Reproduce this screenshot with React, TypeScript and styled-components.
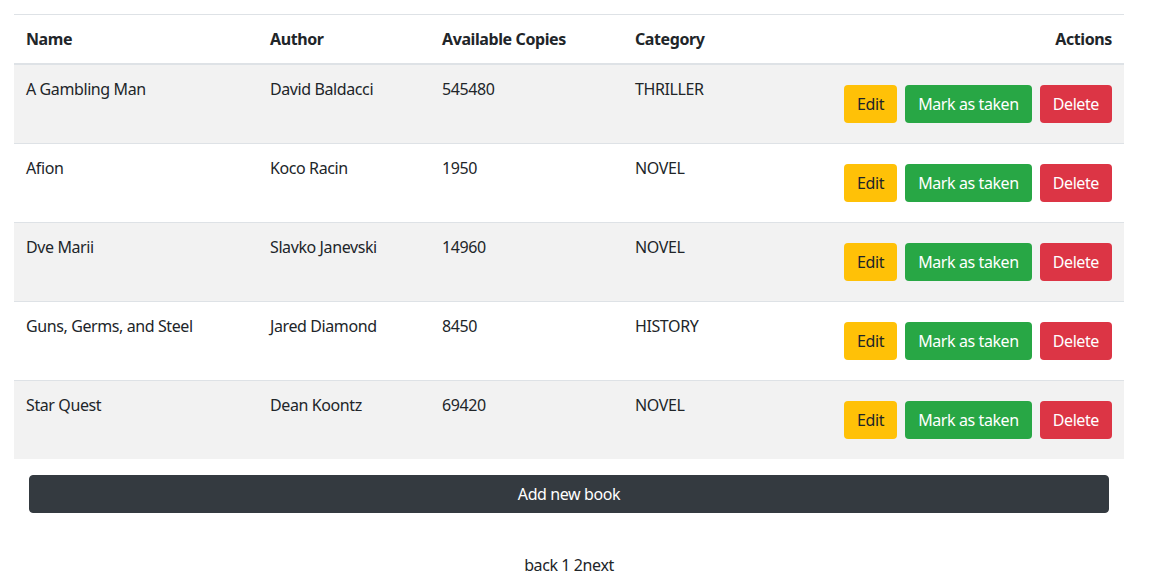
import styled, { createGlobalStyle } from "styled-components";

const GlobalStyle = createGlobalStyle`
  body {
    margin: 0;
    background: #fff;
    color: #212529;
    font-family: "Segoe UI", "Noto Sans", "Open Sans", sans-serif;
    font-size: 16px;
    line-height: 1.5;
    letter-spacing: -0.4px;
  }
`;

const Page = styled.div`
  width: 1110px;
  padding: 14px;
`;

const Table = styled.table`
  width: 100%;
  border-collapse: collapse;
  color: #212529;
`;

const HeadCell = styled.th<{ $right?: boolean; $width?: number }>`
  padding: 12px;
  border-top: 1px solid #dee2e6;
  border-bottom: 2px solid #dee2e6;
  font-weight: 700;
  text-align: ${(p) => (p.$right ? "right" : "left")};
  vertical-align: bottom;
  width: ${(p) => (p.$width ? `${p.$width}px` : "auto")};
  box-sizing: border-box;
`;

const Row = styled.tr<{ $striped: boolean }>`
  background: ${(p) => (p.$striped ? "#f2f2f2" : "transparent")};
`;

const Cell = styled.td`
  padding: 12px;
  border-top: 1px solid #dee2e6;
  vertical-align: top;
`;

const ActionCell = styled(Cell)`
  padding: 20px 12px;
`;

const Actions = styled.div`
  display: flex;
  justify-content: flex-end;
  gap: 8px;
`;

const Button = styled.button<{ $variant: "warning" | "success" | "danger" }>`
  font-family: inherit;
  font-size: 16px;
  line-height: 24px;
  letter-spacing: -0.4px;
  padding: 6px 12px;
  border: 1px solid transparent;
  border-radius: 4px;
  cursor: pointer;
  background: ${(p) =>
    p.$variant === "warning"
      ? "#ffc107"
      : p.$variant === "success"
      ? "#28a745"
      : "#dc3545"};
  color: ${(p) => (p.$variant === "warning" ? "#212529" : "#fff")};
`;

const AddButton = styled.button`
  display: block;
  width: calc(100% - 30px);
  margin: 16px 15px 0;
  font-family: inherit;
  font-size: 16px;
  line-height: 24px;
  letter-spacing: -0.4px;
  padding: 6px 12px;
  border: 1px solid #343a40;
  border-radius: 4px;
  background: #343a40;
  color: #fff;
  cursor: pointer;
`;

const Pager = styled.div`
  margin-top: 40px;
  text-align: center;
  color: #212529;
`;

const books = [
  { name: "A Gambling Man", author: "David Baldacci", copies: 545480, category: "THRILLER" },
  { name: "Afion", author: "Koco Racin", copies: 1950, category: "NOVEL" },
  { name: "Dve Marii", author: "Slavko Janevski", copies: 14960, category: "NOVEL" },
  { name: "Guns, Germs, and Steel", author: "Jared Diamond", copies: 8450, category: "HISTORY" },
  { name: "Star Quest", author: "Dean Koontz", copies: 69420, category: "NOVEL" },
];

function App() {
  return (
    <Page>
      <GlobalStyle />
      <Table>
        <thead>
          <tr>
            <HeadCell $width={244}>Name</HeadCell>
            <HeadCell $width={172}>Author</HeadCell>
            <HeadCell $width={193}>Available Copies</HeadCell>
            <HeadCell $width={150}>Category</HeadCell>
            <HeadCell $right>Actions</HeadCell>
          </tr>
        </thead>
        <tbody>
          {books.map((book, i) => (
            <Row key={book.name} $striped={i % 2 === 0}>
              <Cell>{book.name}</Cell>
              <Cell>{book.author}</Cell>
              <Cell>{book.copies}</Cell>
              <Cell>{book.category}</Cell>
              <ActionCell>
                <Actions>
                  <Button $variant="warning">Edit</Button>
                  <Button $variant="success">Mark as taken</Button>
                  <Button $variant="danger">Delete</Button>
                </Actions>
              </ActionCell>
            </Row>
          ))}
        </tbody>
      </Table>
      <AddButton>Add new book</AddButton>
      <Pager>back 1 2next</Pager>
    </Page>
  );
}

export default App;
